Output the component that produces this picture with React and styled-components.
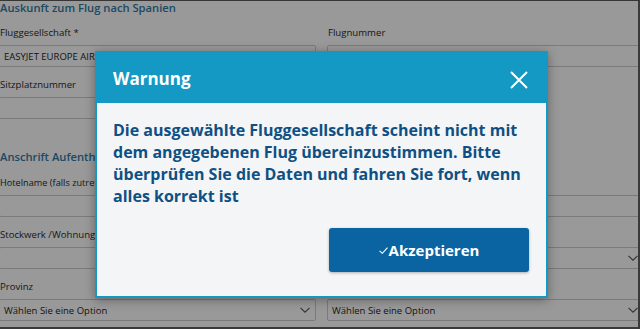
import React from "react";
import styled, { createGlobalStyle } from "styled-components";

const GlobalStyle = createGlobalStyle`
  html, body { margin: 0; padding: 0; background: #fff; overflow: hidden; }
  body { font-family: "Open Sans", "Noto Sans", sans-serif; }
  *, *::before, *::after { box-sizing: border-box; }
`;

const Frame = styled.div`
  position: relative;
  width: 640px;
  height: 329px;
  overflow: hidden;
  background: #fff;
  border-top: 1px solid #363636;
  border-right: 2px solid #3a3a3a;
  border-bottom: 2px solid #3a3a3a;
`;

const Page = styled.div`
  margin-left: -1px;
  width: 645px;
`;

const SectionTitle = styled.h3`
  margin: ${(p) => p.$top || 0}px 0 0 1px;
  font-size: 11.2px;
  font-weight: 600;
  line-height: ${(p) => p.$lh || 16}px;
  color: #337aa3;
  white-space: nowrap;
`;

const FormGrid = styled.div`
  display: grid;
  grid-template-columns: 317px 317px;
  column-gap: 11px;
`;

const Field = styled.div`
  display: flex;
  flex-direction: column;
  min-width: 0;
`;

const Label = styled.label`
  display: block;
  height: 30px;
  padding: 10px 0 0 1px;
  font-size: ${(p) => p.$size || 9.6}px;
  font-weight: 500;
  line-height: 16px;
  color: #2a2a2a;
  white-space: nowrap;
  overflow: hidden;
`;

const Control = styled.div`
  height: 22px;
  display: flex;
  align-items: center;
  justify-content: space-between;
  padding: 0 5px 0 4px;
  border: 1px solid #cdcdcd;
  border-radius: 2px;
  font-size: 9.5px;
  color: #1e1e1e;
  white-space: nowrap;
  overflow: hidden;
`;

const Chevron = () => (
  <svg width="10" height="6" viewBox="0 0 10 6" fill="none">
    <polyline points="0.5,0.8 5,5.2 9.5,0.8" stroke="#555" strokeWidth="1.1" />
  </svg>
);

const Overlay = styled.div`
  position: absolute;
  inset: 0;
  background: rgba(0, 0, 0, 0.4);
`;

const Modal = styled.div`
  position: absolute;
  left: 95px;
  top: 50px;
  width: 453px;
  height: 247px;
  display: flex;
  flex-direction: column;
  border: 2px solid #1399c3;
  background: #f4f5f7;
  box-shadow: 0 2px 10px rgba(0, 0, 0, 0.35);
`;

const ModalHeader = styled.div`
  height: 50px;
  flex: none;
  display: flex;
  align-items: center;
  justify-content: space-between;
  padding: 0 18px 0 16px;
  background: #1399c3;
`;

const ModalTitle = styled.h2`
  margin: 0;
  font-size: 17px;
  font-weight: 700;
  color: #fff;
`;

const CloseButton = styled.button`
  margin-top: 3px;
  padding: 0;
  border: none;
  background: none;
  display: flex;
  cursor: pointer;
`;

const ModalBody = styled.div`
  flex: 1;
  padding: 16px 17px 0 16px;
`;

const Message = styled.p`
  margin: 0;
  font-size: 16px;
  font-weight: 700;
  line-height: 22px;
  color: #0e5083;
`;

const ButtonRow = styled.div`
  display: flex;
  justify-content: flex-end;
  margin-top: 21px;
`;

const PrimaryButton = styled.button`
  width: 200px;
  height: 44px;
  display: flex;
  align-items: center;
  justify-content: center;
  gap: 1px;
  border: none;
  border-radius: 3px;
  background: #0964a1;
  color: #fff;
  font-family: inherit;
  font-size: 15px;
  font-weight: 700;
  box-shadow: 0 1px 3px rgba(0, 0, 0, 0.3);
  cursor: pointer;
`;

export default function App() {
  return (
    <>
      <GlobalStyle />
      <Frame>
        <Page>
          <SectionTitle $lh={14}>Auskunft zum Flug nach Spanien</SectionTitle>
          <FormGrid>
            <Field>
              <Label>Fluggesellschaft *</Label>
              <Control>EASYJET EUROPE AIRLINE GMBH</Control>
            </Field>
            <Field>
              <Label>Flugnummer</Label>
              <Control>EJU1234</Control>
            </Field>
            <Field>
              <Label>Sitzplatznummer</Label>
              <Control />
            </Field>
            <div />
          </FormGrid>
          <SectionTitle $top={30}>Anschrift Aufenthalt</SectionTitle>
          <FormGrid>
            <Field>
              <Label $size={9.2}>Hotelname (falls zutreffend)</Label>
              <Control />
            </Field>
            <Field>
              <Label>Straße</Label>
              <Control />
            </Field>
            <Field>
              <Label>Stockwerk /Wohnung</Label>
              <Control />
            </Field>
            <Field>
              <Label>Land</Label>
              <Control>
                <span>Spanien</span>
                <Chevron />
              </Control>
            </Field>
            <Field>
              <Label>Provinz</Label>
              <Control>
                <span>Wählen Sie eine Option</span>
                <Chevron />
              </Control>
            </Field>
            <Field>
              <Label>Gemeinde</Label>
              <Control>
                <span>Wählen Sie eine Option</span>
                <Chevron />
              </Control>
            </Field>
          </FormGrid>
        </Page>
        <Overlay />
        <Modal role="dialog">
          <ModalHeader>
            <ModalTitle>Warnung</ModalTitle>
            <CloseButton aria-label="Schließen">
              <svg width="18" height="18" viewBox="0 0 18 18" fill="none">
                <path d="M1 1L17 17M17 1L1 17" stroke="#fff" strokeWidth="2" />
              </svg>
            </CloseButton>
          </ModalHeader>
          <ModalBody>
            <Message>
              Die ausgewählte Fluggesellschaft scheint nicht mit dem angegebenen Flug
              übereinzustimmen. Bitte überprüfen Sie die Daten und fahren Sie fort,
              wenn alles korrekt ist
            </Message>
            <ButtonRow>
              <PrimaryButton>
                <svg width="9" height="7" viewBox="0 0 9 7" fill="none">
                  <polyline points="0.6,3.8 3.3,6.3 8.5,0.6" stroke="#fff" strokeWidth="1.1" />
                </svg>
                Akzeptieren
              </PrimaryButton>
            </ButtonRow>
          </ModalBody>
        </Modal>
      </Frame>
    </>
  );
}
